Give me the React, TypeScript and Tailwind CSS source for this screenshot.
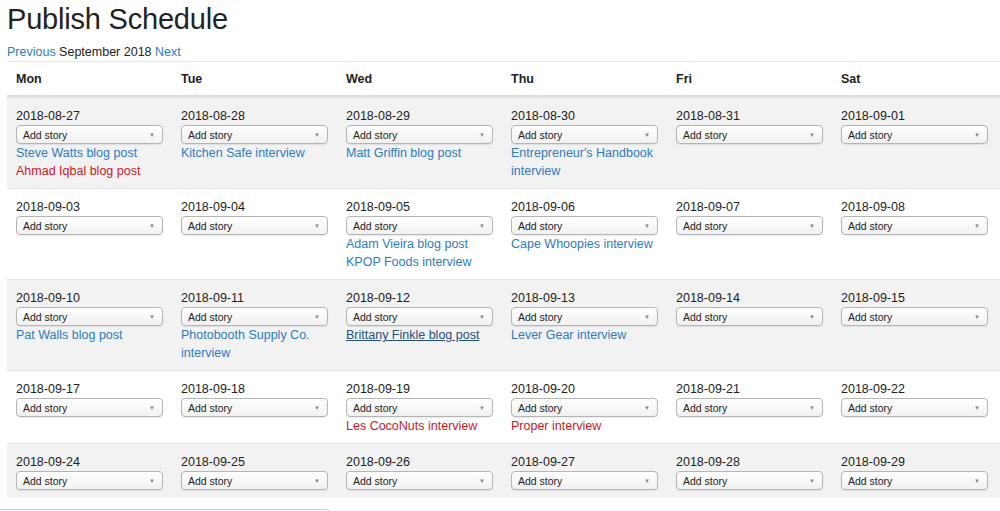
import React from 'react';

type Story = { title: string; tone?: 'blue' | 'red' | 'visited' };
type Day = { date: string; stories: Story[] };

const weekdays = ['Mon', 'Tue', 'Wed', 'Thu', 'Fri', 'Sat'];

const weeks: Day[][] = [
  [
    { date: '2018-08-27', stories: [{ title: 'Steve Watts blog post' }, { title: 'Ahmad Iqbal blog post', tone: 'red' }] },
    { date: '2018-08-28', stories: [{ title: 'Kitchen Safe interview' }] },
    { date: '2018-08-29', stories: [{ title: 'Matt Griffin blog post' }] },
    { date: '2018-08-30', stories: [{ title: "Entrepreneur's Handbook interview" }] },
    { date: '2018-08-31', stories: [] },
    { date: '2018-09-01', stories: [] },
  ],
  [
    { date: '2018-09-03', stories: [] },
    { date: '2018-09-04', stories: [] },
    { date: '2018-09-05', stories: [{ title: 'Adam Vieira blog post' }, { title: 'KPOP Foods interview' }] },
    { date: '2018-09-06', stories: [{ title: 'Cape Whoopies interview' }] },
    { date: '2018-09-07', stories: [] },
    { date: '2018-09-08', stories: [] },
  ],
  [
    { date: '2018-09-10', stories: [{ title: 'Pat Walls blog post' }] },
    { date: '2018-09-11', stories: [{ title: 'Photobooth Supply Co. interview' }] },
    { date: '2018-09-12', stories: [{ title: 'Brittany Finkle blog post', tone: 'visited' }] },
    { date: '2018-09-13', stories: [{ title: 'Lever Gear interview' }] },
    { date: '2018-09-14', stories: [] },
    { date: '2018-09-15', stories: [] },
  ],
  [
    { date: '2018-09-17', stories: [] },
    { date: '2018-09-18', stories: [] },
    { date: '2018-09-19', stories: [{ title: 'Les CocoNuts interview', tone: 'red' }] },
    { date: '2018-09-20', stories: [{ title: 'Proper interview', tone: 'red' }] },
    { date: '2018-09-21', stories: [] },
    { date: '2018-09-22', stories: [] },
  ],
  [
    { date: '2018-09-24', stories: [] },
    { date: '2018-09-25', stories: [] },
    { date: '2018-09-26', stories: [] },
    { date: '2018-09-27', stories: [] },
    { date: '2018-09-28', stories: [] },
    { date: '2018-09-29', stories: [] },
  ],
];

const toneClass = {
  blue: 'text-[#2f7bbf]',
  red: 'text-[#d0161f]',
  visited: 'text-[#23527c] underline',
};

const AddStory = () => (
  <div className="flex h-[19px] w-[147px] items-center justify-between rounded-[4px] border border-[#b5b5b5] bg-gradient-to-b from-white to-[#f1f1f1] pl-[6px] pr-[7px] text-[10.5px] text-[#222] shadow-[0_1px_1px_rgba(0,0,0,0.08)]">
    <span>Add story</span>
    <span className="text-[6px] text-[#888]">▼</span>
  </div>
);

export default function App() {
  return (
    <div className="min-h-[511px] overflow-hidden bg-white font-['Liberation_Sans',Arial,sans-serif] text-[#222]">
      <h1 className="pl-[7px] pt-[2px] text-[29px] leading-[35px] tracking-[-0.2px]">Publish Schedule</h1>
      <div className="pl-[7px] pt-[6px] text-[12.5px] leading-[18px]">
        <a className="text-[#2f7bbf]">Previous</a> September 2018 <a className="text-[#2f7bbf]">Next</a>
      </div>

      <div className="ml-[7px] border-t border-[#e4e4e4]">
        <div className="grid grid-cols-[repeat(6,165px)] border-b-2 border-[#dedede]">
          {weekdays.map((d) => (
            <div key={d} className="px-[9px] pb-[8px] pt-[9px] text-[12.5px] font-bold leading-[16px]">
              {d}
            </div>
          ))}
        </div>

        {weeks.map((week, i) => (
          <div
            key={i}
            className={`grid grid-cols-[repeat(6,165px)] border-t border-[#e6e6e6] first:border-t-0 ${i % 2 === 0 ? 'bg-[#f2f2f2]' : 'bg-white'}`}
          >
            {week.map((day) => (
              <div key={day.date} className="px-[9px] pb-[8px] pt-[9px] text-[12.5px] leading-[18px]">
                <div>{day.date}</div>
                <AddStory />
                {day.stories.map((s) => (
                  <div key={s.title} className={toneClass[s.tone ?? 'blue']}>
                    {s.title}
                  </div>
                ))}
              </div>
            ))}
          </div>
        ))}
      </div>

      <div className="mt-[11px] h-[6px] w-[330px] rounded-tr-[4px] border-t border-r border-[#cfcfcf]" />
    </div>
  );
}
